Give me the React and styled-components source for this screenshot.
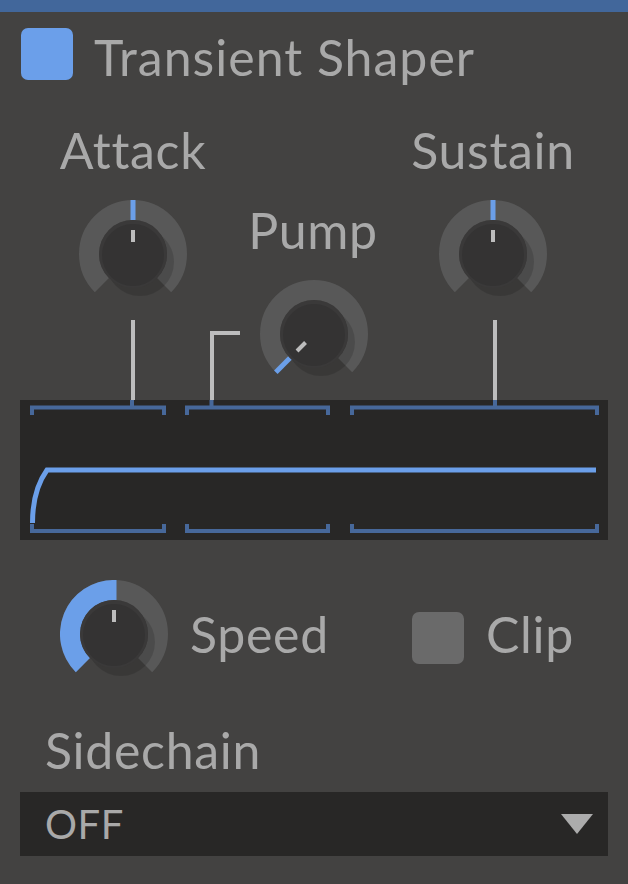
import styled, { createGlobalStyle } from 'styled-components';

const GlobalStyle = createGlobalStyle`
    * { box-sizing: border-box; }
    body {
        margin: 0;
        background-color: #434241;
        font-family: 'Lato', 'Open Sans', sans-serif;
    }
`;

const BLUE = "#6b9fe9";
const WIRE = "#bdbdbd";
const BRACKET = "#47689a";

function polar(r, a) {
    const rad = (a - 90) * Math.PI / 180;
    return [54 + r * Math.cos(rad), 54 + r * Math.sin(rad)];
}

function arc(r, a0, a1) {
    const [x0, y0] = polar(r, a0);
    const [x1, y1] = polar(r, a1);
    const large = a1 - a0 > 180 ? 1 : 0;
    return `M${x0} ${y0} A${r} ${r} 0 ${large} 1 ${x1} ${y1}`;
}

function Knob({ value, from }) {
    const start = from === undefined ? value : from;
    const [t0x, t0y] = polar(34, value);
    const [t1x, t1y] = polar(54, value);
    const [p0x, p0y] = polar(12, value);
    const [p1x, p1y] = polar(24, value);
    return (
        <KnobSvg width="108" height="108" viewBox="0 0 108 108">
            <path d={arc(44, -135, 135)} stroke="#585858" strokeWidth="20" fill="none" />
            {start < value && (
                <path d={arc(44, start, value)} stroke={BLUE} strokeWidth="20" fill="none" />
            )}
            <line x1={t0x} y1={t0y} x2={t1x} y2={t1y} stroke={BLUE} strokeWidth="5" />
            <circle cx="61" cy="62" r="34" fill="rgba(0,0,0,0.14)" />
            <circle cx="54" cy="54" r="34" fill="#3a3939" />
            <circle cx="54" cy="55" r="31" fill="#343333" />
            <line x1={p0x} y1={p0y} x2={p1x} y2={p1y} stroke={WIRE} strokeWidth="4" />
        </KnobSvg>
    );
}

function Bracket({ x1, x2, notch }) {
    const a = x1 + 2;
    const b = x2 - 2;
    return (
        <g stroke={BRACKET} strokeWidth="4" fill="none">
            <path d={`M${a} 15 V7.5 H${b} V15`} />
            <path d={`M${notch} 0 V7.5`} />
            <path d={`M${a} 124 V131 H${b} V124`} />
        </g>
    );
}

export default function App() {
    return (
        <>
            <GlobalStyle />
            <Panel>
                <TopBar />
                <Header>
                    <Check $on />
                    <Title>Transient Shaper</Title>
                </Header>

                <KnobRow>
                    <KnobColumn>
                        <Label>Attack</Label>
                        <Knob value={0} />
                        <Wire />
                    </KnobColumn>
                    <KnobColumn $top={80}>
                        <Label>Pump</Label>
                        <PumpBody>
                            <Elbow />
                            <Knob value={-135} />
                        </PumpBody>
                    </KnobColumn>
                    <KnobColumn>
                        <Label>Sustain</Label>
                        <Knob value={0} />
                        <Wire $shift={2} />
                    </KnobColumn>
                </KnobRow>

                <Display>
                    <svg width="588" height="140" viewBox="0 0 588 140">
                        <Bracket x1={10} x2={146} notch={112} />
                        <Bracket x1={165} x2={310} notch={191.5} />
                        <Bracket x1={330} x2={579} notch={475} />
                        <path
                            d="M12.5 123 C12.5 100, 17 84, 27 70 L576 70"
                            stroke={BLUE}
                            strokeWidth="5"
                            fill="none"
                        />
                    </svg>
                </Display>

                <ControlRow>
                    <Group>
                        <Knob value={0} from={-135} />
                        <Label>Speed</Label>
                    </Group>
                    <Group>
                        <ClipBox />
                        <Label>Clip</Label>
                    </Group>
                </ControlRow>

                <SideLabel>Sidechain</SideLabel>
                <Select>
                    <span>OFF</span>
                    <svg width="32" height="20" viewBox="0 0 32 20">
                        <polygon points="0,0 32,0 16,20" fill="#acacac" />
                    </svg>
                </Select>
            </Panel>
        </>
    );
}

const Panel = styled.div`
    width: 628px;
    min-height: 884px;
    background-color: #434241;
    overflow: hidden;
`;

const TopBar = styled.div`
    height: 12px;
    background-color: #42679b;
`;

const Header = styled.div`
    height: 52px;
    margin-top: 16px;
    padding-left: 21px;
    display: flex;
    align-items: flex-start;
    gap: 21px;
`;

const Check = styled.div`
    width: 52px;
    height: 52px;
    flex-shrink: 0;
    border-radius: 7px;
    background-color: ${props => props.$on ? "#6b9fea" : "#6a6a6a"};
`;

const ClipBox = styled(Check)`
    margin-top: 8px;
`;

const Title = styled.h1`
    margin: -1.5px 0 0 0;
    font-family: 'Lato', sans-serif;
    font-weight: 400;
    font-size: 50px;
    line-height: 60px;
    letter-spacing: 1px;
    color: #a9a9a9;
    white-space: nowrap;
`;

const KnobRow = styled.div`
    height: 320px;
    padding-left: 43px;
    display: flex;
    align-items: flex-start;
`;

const KnobColumn = styled.div`
    width: 180px;
    padding-top: ${props => 39.5 + (props.$top || 0)}px;
    display: flex;
    flex-direction: column;
    align-items: center;
`;

const Label = styled.div`
    font-family: 'Lato', sans-serif;
    font-weight: 400;
    font-size: 50px;
    line-height: 60px;
    letter-spacing: 0.7px;
    color: #a9a9a9;
    white-space: nowrap;
`;

const KnobSvg = styled.svg`
    display: block;
    flex-shrink: 0;
    margin-top: 20.5px;
`;

const Wire = styled.div`
    width: 4px;
    height: 80px;
    margin-top: 12px;
    margin-left: ${props => (props.$shift || 0) * 2}px;
    background-color: ${WIRE};
`;

const PumpBody = styled.div`
    align-self: flex-start;
    margin-left: -13px;
    display: flex;
    align-items: flex-start;
    gap: 20px;
`;

const Elbow = styled.div`
    width: 30px;
    height: 69px;
    margin-top: 71.5px;
    border-left: 4px solid ${WIRE};
    border-top: 4px solid ${WIRE};
`;

const Display = styled.div`
    height: 140px;
    margin: 0 20px;
    background-color: #282726;
    svg { display: block; }
`;

const ControlRow = styled.div`
    height: 108px;
    margin-top: 40px;
    padding-left: 60px;
    display: grid;
    grid-template-columns: 352px auto;
    align-items: center;
    ${KnobSvg} { margin-top: 0; }
`;

const Group = styled.div`
    display: flex;
    align-items: center;
    gap: 22px;
`;

const SideLabel = styled(Label)`
    margin-top: 31.5px;
    padding-left: 45px;
`;

const Select = styled.div`
    height: 64px;
    margin: 12.5px 20px 0 20px;
    padding: 0 15px 0 25px;
    background-color: #282726;
    display: flex;
    align-items: center;
    justify-content: space-between;
    span {
        font-family: 'Lato', sans-serif;
        font-size: 40px;
        line-height: 48px;
        letter-spacing: 0.5px;
        color: #a9a9a9;
    }
    svg { display: block; }
`;
